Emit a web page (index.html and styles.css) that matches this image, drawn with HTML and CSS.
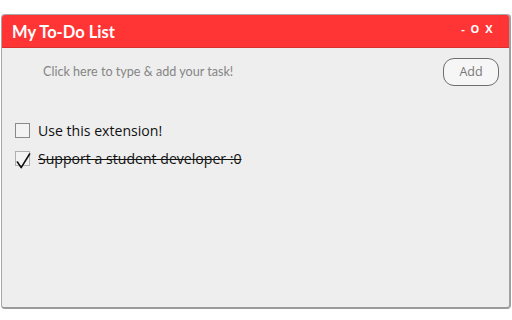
FILE: index.html
```html
<!DOCTYPE html>
<html>
<head>
<meta charset="utf-8">
<link rel="stylesheet" href="styles.css">
</head>
<body>
<div class="window">
  <div class="titlebar">
    <span class="title">My To-Do List</span>
    <span class="controls">- O X</span>
  </div>
  <div class="content">
    <div class="input-row">
      <span class="placeholder">Click here to type &amp; add your task!</span>
      <button class="add">Add</button>
    </div>
    <ul class="tasks">
      <li class="task"><span class="box"></span><span class="label">Use this extension!</span></li>
      <li class="task done"><span class="box"><svg class="check" viewBox="0 0 16 18" width="15" height="17"><path d="M1.5 9.5 L5.5 15.5 L14.5 1" fill="none" stroke="#111" stroke-width="1.7" stroke-linecap="round" stroke-linejoin="round"/></svg></span><span class="label">Support a student developer :0</span></li>
    </ul>
  </div>
</div>
</body>
</html>
```
FILE: styles.css
```css
html, body {
  margin: 0;
  padding: 0;
  background: #ffffff;
  width: 512px;
  height: 320px;
  overflow: hidden;
}
.window {
  margin: 14px 1px 0 1px;
  height: 295px;
  box-sizing: border-box;
  border: 1px solid #a8a8a8;
  border-bottom: 2px solid #9a9a9a;
  border-right: 2px solid #a0a0a0;
  border-radius: 4px;
  background: #eeeeee;
  overflow: hidden;
  display: flex;
  flex-direction: column;
}
.titlebar {
  height: 32px;
  background: #ff3434;
  display: flex;
  align-items: center;
  justify-content: space-between;
  padding: 0 15px 0 10px;
  border-bottom: 1px solid #d83030;
  color: #fff;
}
.title {
  font-family: Lato, "Liberation Sans", sans-serif;
  font-weight: 700;
  font-size: 16.5px;
  margin-top: 2px;
}
.controls {
  font-family: "Open Sans", "Liberation Sans", sans-serif;
  font-weight: 700;
  font-size: 11px;
  letter-spacing: 1.5px;
  margin-top: -6px;
}
.content {
  flex: 1;
  padding: 10px 10px 0 13px;
}
.input-row {
  display: flex;
  align-items: center;
  justify-content: space-between;
  height: 27px;
}
.placeholder {
  font-family: Lato, "Liberation Sans", sans-serif;
  font-size: 12.6px;
  color: #858585;
  margin-left: 28px;
  margin-top: 0px;
}
.add {
  width: 56px;
  height: 28px;
  border: 1px solid #6e6e6e;
  border-radius: 11px;
  background: #f6f6f6;
  font-family: "Open Sans", "Liberation Sans", sans-serif;
  font-size: 12.5px;
  color: #777;
  padding: 0;
}
.tasks {
  list-style: none;
  margin: 31px 0 0 0;
  padding: 0;
}
.task {
  display: flex;
  align-items: center;
  height: 28px;
  font-family: "Open Sans", "Noto Sans", sans-serif;
  font-size: 14.1px;
  color: #111;
}
.box {
  position: relative;
  width: 13px;
  height: 13px;
  border: 1px solid #8a8a8a;
  background: #f3f3f3;
  margin-left: 0;
  margin-right: 8px;
}
.done .box {
  border-color: #b0b0b0;
}
.check {
  position: absolute;
  left: 0px;
  top: 1px;
}
.done .label {
  text-decoration: line-through;
  text-decoration-thickness: 1.2px;
}
```
